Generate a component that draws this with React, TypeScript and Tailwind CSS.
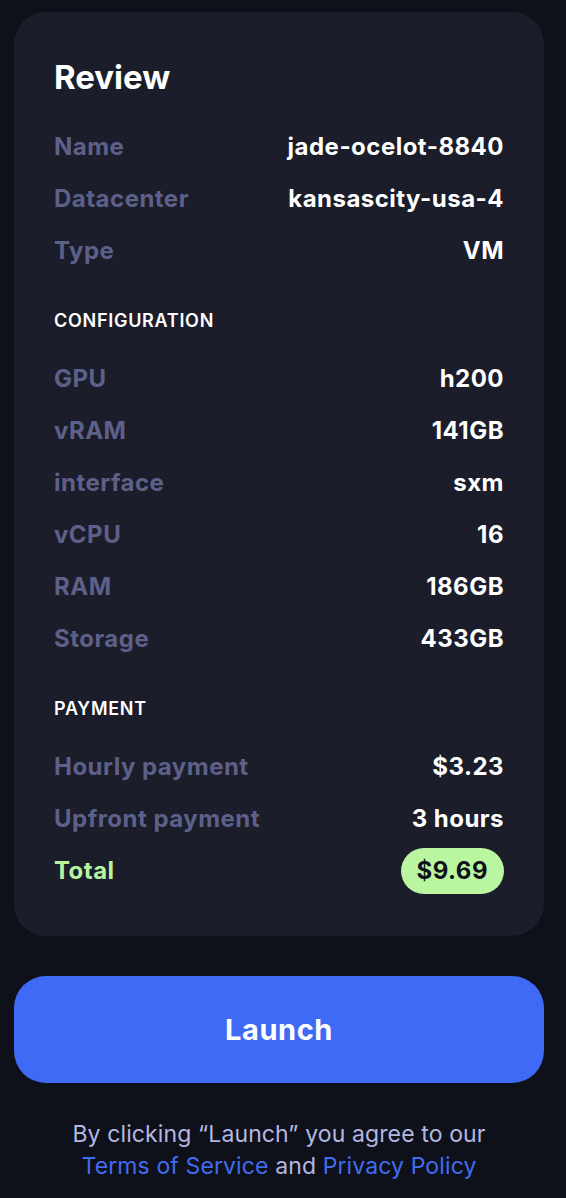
import React from 'react';

type Row = { label: string; value: string };

const GENERAL: Row[] = [
  { label: 'Name', value: 'jade-ocelot-8840' },
  { label: 'Datacenter', value: 'kansascity-usa-4' },
  { label: 'Type', value: 'VM' },
];

const CONFIG: Row[] = [
  { label: 'GPU', value: 'h200' },
  { label: 'vRAM', value: '141GB' },
  { label: 'interface', value: 'sxm' },
  { label: 'vCPU', value: '16' },
  { label: 'RAM', value: '186GB' },
  { label: 'Storage', value: '433GB' },
];

// ── ReviewRow ─────────────────────────────────────────────────────────────────

function ReviewRow({ label, value }: Row) {
  return (
    <div className="flex items-center justify-between h-[52px] text-[24px]">
      <span className="font-bold text-[#5d6189] tracking-[0.02em]">{label}</span>
      <span className="font-bold text-white tracking-[0.02em]">{value}</span>
    </div>
  );
}

function SectionTitle({ children }: { children: React.ReactNode }) {
  return (
    <h3 className="mt-[34px] mb-[22px] h-5 leading-5 text-[18px] font-semibold text-white uppercase tracking-[0.04em]">
      {children}
    </h3>
  );
}

export default function App() {
  return (
    <div
      className="min-h-screen bg-[#0e1119] pl-[14px] pr-[22px] pt-3 pb-6"
      style={{ fontFamily: 'Inter, "Noto Sans", sans-serif' }}
    >
      {/* Review card */}
      <div className="bg-[#1b1d2a] rounded-[32px] px-[40px] pt-[45px] pb-[39px]">
        <h2 className="text-[33px] leading-10 font-bold text-white mb-6">Review</h2>

        {GENERAL.map(r => <ReviewRow key={r.label} {...r} />)}

        <SectionTitle>Configuration</SectionTitle>
        {CONFIG.map(r => <ReviewRow key={r.label} {...r} />)}

        <SectionTitle>Payment</SectionTitle>
        <ReviewRow label="Hourly payment" value="$3.23" />
        <ReviewRow label="Upfront payment" value="3 hours" />
        <div className="flex items-center justify-between h-[52px] text-[24px]">
          <span className="font-bold text-[#b9f3a0] tracking-[0.02em]">Total</span>
          <span className="font-bold text-[#0e1119] bg-[#baf5a0] rounded-full h-[46px] px-4 flex items-center tracking-[0.02em]">
            $9.69
          </span>
        </div>
      </div>

      {/* Launch */}
      <button className="mt-10 w-full h-[107px] rounded-[32px] bg-[#3e6af5] text-white text-[29px] font-bold tracking-[0.02em]">
        Launch
      </button>

      <p className="mt-[35px] text-center text-[23px] leading-8 text-[#b4b7e2] tracking-[0.005em]">
        By clicking “Launch” you agree to our
        <br />
        <a className="text-[#416cf0]">Terms of Service</a> and{' '}
        <a className="text-[#416cf0]">Privacy Policy</a>
      </p>
    </div>
  );
}
